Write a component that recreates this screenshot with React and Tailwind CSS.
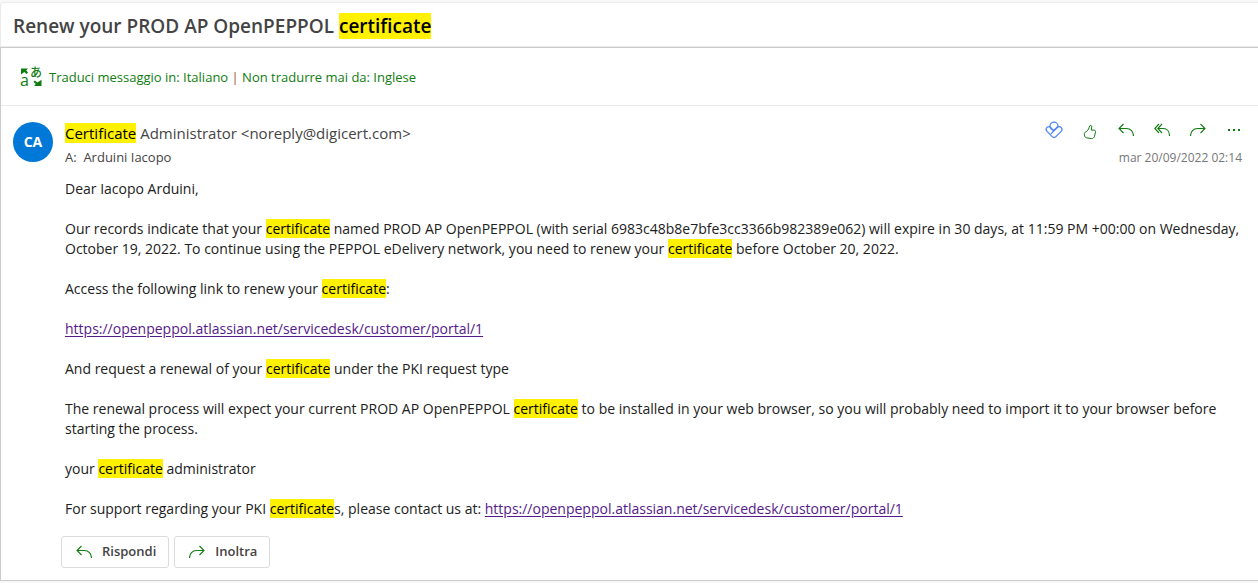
import React from "react";

function Mark({ children }) {
  return <mark className="bg-[#fff100] text-black">{children}</mark>;
}

function ReplyIcon() {
  return (
    <svg width="16" height="14" viewBox="0 0 16 14" fill="none" stroke="currentColor" strokeWidth="1.1" aria-hidden="true">
      <path d="M5.5 1 1 5.5 5.5 10M1 5.5H8.5C12.5 5.5 15.5 8.5 15.5 13" />
    </svg>
  );
}

function ReplyAllIcon() {
  return (
    <svg width="16" height="14" viewBox="0 0 16 14" fill="none" stroke="currentColor" strokeWidth="1.1" aria-hidden="true">
      <path d="M5 1 .8 5.5 5 10M8 1 3.8 5.5 8 10M3.8 5.5H9.5C13 5.5 15.5 8.5 15.5 13" />
    </svg>
  );
}

function ForwardIcon() {
  return (
    <svg width="16" height="14" viewBox="0 0 16 14" fill="none" stroke="currentColor" strokeWidth="1.1" aria-hidden="true">
      <path d="M10.5 1 15 5.5 10.5 10M15 5.5H7.5C3.5 5.5.5 8.5.5 13" />
    </svg>
  );
}

function LikeIcon() {
  return (
    <svg className="mt-1" width="14" height="16" viewBox="0 0 14 16" fill="none" stroke="currentColor" strokeWidth="1" strokeLinejoin="round" aria-hidden="true">
      <path d="M7 1.5C8 1.1 8.8 1.7 8.7 3L8.3 6.1H10.9C12.2 6.1 12.8 7 12.5 8.3L11.5 12.2C11.1 13.8 9.9 14.7 8.3 14.5L3.8 13.9C2.5 13.7 1.9 13 1.7 12L1.3 10.2C1.1 9.1 1.6 8.5 2.6 8 4.5 7 5.7 5.4 6 3.6Z" />
    </svg>
  );
}

function VivaIcon() {
  return (
    <svg width="18" height="18" viewBox="0 0 18 18" fill="none" stroke="currentColor" strokeWidth="1.3" strokeLinejoin="round" aria-hidden="true">
      <path d="M4.9 5.4C4.9 3 6.7 1.2 9 1.2S13.1 3 13.1 5.3" />
      <path d="M8.5 9.6 5.6 6.4C4.6 5.3 3 5.3 1.9 6.4.9 7.5.9 9 1.9 10.1L7.2 15.6C8.3 16.8 9.8 16.8 10.9 15.6L16.1 10.4C17.1 9.3 17.1 7.6 16.1 6.5 15 5.4 13.4 5.4 12.3 6.5L6 12.9" />
      <path d="M4.9 5.4C5.6 8 7.6 9.3 9.2 8.9L13.1 5.3" />
    </svg>
  );
}

function TranslateIcon() {
  return (
    <svg className="overflow-visible" width="24" height="24" viewBox="0 0 24 24" fill="currentColor" aria-hidden="true">
      <path d="M2 2.5H9L7.2 4.4 9 6.4 7.6 7.9 5.3 6.1 2 8.5Z" />
      <path d="M22.5 20H15L16.9 18.1 14.5 15.9 15.8 14.5 18.4 16.5 22.5 13.7Z" />
      <text x="11" y="11" fontSize="12" fontWeight="500" fontFamily="Noto Sans CJK JP, sans-serif">あ</text>
      <text x="1" y="20" fontSize="16" fontFamily="Open Sans, sans-serif">a</text>
    </svg>
  );
}

function MoreIcon() {
  return (
    <svg width="16" height="14" viewBox="0 0 16 14" fill="currentColor" aria-hidden="true">
      <path d="M2 6h2v2H2zM7 6h2v2H7zM12 6h2v2h-2z" />
    </svg>
  );
}

function IconButton({ label, children, className = "text-[#107c10]" }) {
  return (
    <button type="button" aria-label={label} className={`flex h-6 w-5 items-center justify-center ${className}`}>
      {children}
    </button>
  );
}

function ActionButton({ icon, children }) {
  return (
    <button type="button" className="flex h-8 items-center gap-2.5 rounded-[3px] border border-[#dcdcdc] pr-3 pl-3.5 text-[13px] font-semibold text-[#444]">
      <span className="text-[#107c10]">{icon}</span>
      {children}
    </button>
  );
}

function PortalLink() {
  return (
    <a className="text-[#551a8b] underline underline-offset-2" href="https://openpeppol.atlassian.net/servicedesk/customer/portal/1">
      https://openpeppol.atlassian.net/servicedesk/customer/portal/1
    </a>
  );
}

export default function App() {
  return (
    <main className="min-h-screen bg-[#f8f8f8] pt-0.5 font-['Open_Sans','Noto_Sans',sans-serif]">
      <header className="flex h-[45px] items-center rounded-tl border-t border-l border-b border-[#ebebeb] bg-white px-3 pt-0.5">
        <h1 className="text-[19px] leading-7 font-semibold text-[#444]">
          Renew your PROD AP OpenPEPPOL <Mark>certificate</Mark>
        </h1>
      </header>
      <article className="border border-r-0 border-[#cccccc] bg-white">
        <div className="flex h-[58px] items-center gap-1.5 border-b border-[#eaeaea] px-[18px] pt-0.5 text-[13px] text-[#107c10]">
          <TranslateIcon />
          <p>
            <a href="#translate">Traduci messaggio in: Italiano</a> <span className="text-[#a4501e]">|</span>{" "}
            <a href="#never">Non tradurre mai da: Inglese</a>
          </p>
        </div>
        <div className="flex gap-3 pt-3 pr-3.5 pl-3">
          <div className="mt-1 flex size-10 shrink-0 items-center justify-center rounded-full bg-[#0078d7] text-sm font-bold text-white">
            CA
          </div>
          <div className="min-w-0 flex-1">
            <div className="flex items-start justify-between">
              <div className="pt-[3px] text-[#444]">
                <p className="text-[15px] leading-6">
                  <Mark>Certificate</Mark> Administrator &lt;noreply@digicert.com&gt;
                </p>
                <p className="text-[13px] leading-6">A:&nbsp; Arduini Iacopo</p>
              </div>
              <div className="flex flex-col items-end">
                <div className="flex gap-4">
                  <IconButton label="Viva" className="text-[#4f86f7]"><VivaIcon /></IconButton>
                  <IconButton label="Mi piace"><LikeIcon /></IconButton>
                  <IconButton label="Rispondi"><ReplyIcon /></IconButton>
                  <IconButton label="Rispondi a tutti"><ReplyAllIcon /></IconButton>
                  <IconButton label="Inoltra"><ForwardIcon /></IconButton>
                  <IconButton label="Altre azioni"><MoreIcon /></IconButton>
                </div>
                <time className="pt-1 pr-0.5 text-xs leading-6 text-[#777]">mar 20/09/2022 02:14</time>
              </div>
            </div>
            <div className="-mr-3.5 flex flex-col gap-5 pt-[9px] pr-3 text-sm leading-5 text-[#212121]">
              <p>Dear Iacopo Arduini,</p>
              <p>
                Our records indicate that your <Mark>certificate</Mark> named PROD AP OpenPEPPOL (with serial
                6983c48b8e7bfe3cc3366b982389e062) will expire in 30 days, at 11:59 PM +00:00 on Wednesday, October 19,
                2022. To continue using the PEPPOL eDelivery network, you need to renew your <Mark>certificate</Mark>{" "}
                before October 20, 2022.
              </p>
              <p>Access the following link to renew your <Mark>certificate</Mark>:</p>
              <p><PortalLink /></p>
              <p>And request a renewal of your <Mark>certificate</Mark> under the PKI request type</p>
              <p>
                The renewal process will expect your current PROD AP OpenPEPPOL <Mark>certificate</Mark> to be installed
                in your web browser, so you will probably need to import it to your browser before starting the process.
              </p>
              <p>your <Mark>certificate</Mark> administrator</p>
              <p>For support regarding your PKI <Mark>certificate</Mark>s, please contact us at: <PortalLink /></p>
            </div>
            <div className="-ml-1 flex gap-[5px] pt-[17px] pb-3">
              <ActionButton icon={<ReplyIcon />}>Rispondi</ActionButton>
              <ActionButton icon={<ForwardIcon />}>Inoltra</ActionButton>
            </div>
          </div>
        </div>
      </article>
    </main>
  );
}
